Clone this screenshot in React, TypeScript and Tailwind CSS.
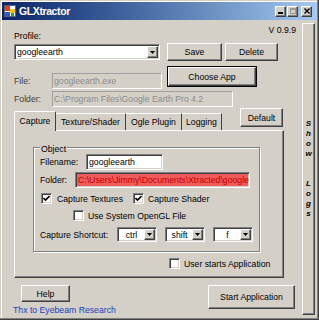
import React from "react";

const raised =
  "border border-t-white border-l-white border-r-[#404040] border-b-[#404040] shadow-[inset_-1px_-1px_0_#808080]";
const sunken =
  "border border-t-[#808080] border-l-[#808080] border-r-white border-b-white shadow-[inset_1px_1px_0_#404040,inset_-1px_-1px_0_#d4d0c8]";

function Btn({ children, className = "" }: { children: React.ReactNode; className?: string }) {
  return <div className={`${raised} bg-[#d4d0c8] flex items-center justify-center ${className}`}>{children}</div>;
}

function Arrow() {
  return (
    <svg width="5" height="3" viewBox="0 0 5 3">
      <path d="M0 0h5L2.5 3z" fill="#000" />
    </svg>
  );
}

function Combo({ value, className = "", center }: { value: string; className?: string; center?: boolean }) {
  return (
    <div className={`${sunken} bg-white p-[1px] flex items-stretch ${className}`}>
      <div className={`flex-1 flex items-center ${center ? "justify-center" : "pl-[1px]"}`}>{value}</div>
      <div className={`${raised} bg-[#d4d0c8] w-[11px] flex items-center justify-center`}>
        <Arrow />
      </div>
    </div>
  );
}

function Check({ checked }: { checked?: boolean }) {
  return (
    <div className={`w-[11px] h-[11px] bg-white ${sunken} flex items-center justify-center shrink-0`}>
      {checked && (
        <svg width="7" height="7" viewBox="0 0 7 7">
          <path d="M0.5 3 L2.5 5 L6.5 1" stroke="#000" strokeWidth="1.6" fill="none" />
        </svg>
      )}
    </div>
  );
}

function TitleIcon() {
  return (
    <svg width="12" height="12" viewBox="0 0 12 12">
      <rect x="0.5" y="0.5" width="11" height="11" fill="#fff" stroke="#5a5a7a" />
      <rect x="1" y="1" width="5" height="5" fill="#e0401c" />
      <rect x="6" y="4" width="5" height="4" fill="#f2c418" />
      <rect x="1" y="7" width="5" height="4" fill="#2a58d0" />
      <rect x="7" y="8" width="3" height="3" fill="#3a9a3a" />
    </svg>
  );
}

export default function App() {
  return (
    <div className="w-[319px] h-[320px] bg-[#d4d0c8] flex flex-col overflow-hidden text-black text-[8.7px] leading-[10px] font-['Liberation_Sans',Arial,sans-serif] shadow-[inset_-1px_-1px_0_#404040,inset_-2px_-2px_0_#808080,inset_1px_1px_0_#d4d0c8,inset_2px_2px_0_#ffffff]">
      {/* title bar */}
      <div className="mt-[2px] mx-[2px] h-[18px] flex items-center bg-linear-to-r from-[#0a246a] to-[#a6caf0] shrink-0">
        <div className="ml-[2px]">
          <TitleIcon />
        </div>
        <span className="ml-[3px] text-white font-bold text-[10.5px] tracking-[-0.4px] leading-[12px]">GLXtractor</span>
        <div className="ml-auto mr-[5px] flex items-center">
          <Btn className="w-[11px] h-[11px] items-end pb-[2px]">
            <div className="w-[5px] h-[2px] bg-black" />
          </Btn>
          <Btn className="w-[11px] h-[11px] ml-[1px]">
            <div className="w-[6px] h-[6px] border border-t-2 border-[#9a9a9a]" />
          </Btn>
          <Btn className="w-[11px] h-[11px] ml-[3px]">
            <svg width="6" height="6" viewBox="0 0 6 6">
              <path d="M0.5 0.5 L5.5 5.5 M5.5 0.5 L0.5 5.5" stroke="#000" strokeWidth="1.4" />
            </svg>
          </Btn>
        </div>
      </div>

      {/* body */}
      <div className="flex-1 flex">
        <div className="w-[302px] flex flex-col">
          {/* profile + version */}
          <div className="h-[23px] flex justify-between items-start">
            <span className="ml-[14px] mt-[11px]">Profile:</span>
            <span className="mt-[5px] mr-[6px]">V 0.9.9</span>
          </div>

          {/* profile combo + buttons */}
          <div className="h-[18px] flex items-start">
            <Combo value="googleearth" className="ml-[14px] mt-[1px] w-[146px] h-[16px]" />
            <Btn className="ml-[7px] w-[55px] h-[18px]">Save</Btn>
            <Btn className="ml-[3px] w-[53px] h-[18px]">Delete</Btn>
          </div>

          {/* file */}
          <div className="mt-[5px] flex items-start">
            <div className="mt-[7px] flex items-center">
              <span className="ml-[14px] w-[38px] text-[#404040]">File:</span>
              <div className="w-[110px] h-[16px] border border-t-[#a0a0a0] border-l-[#a0a0a0] border-r-white border-b-white pl-[1px] flex items-center text-[#8c8c8c]">
                googleearth.exe
              </div>
            </div>
            <div className="ml-[5px] border border-black">
              <Btn className="w-[88px] h-[19px]">Choose App</Btn>
            </div>
          </div>

          {/* folder */}
          <div className="mt-[2px] flex items-center">
            <span className="ml-[14px] w-[38px] text-[#404040]">Folder:</span>
            <div className="w-[181px] h-[16px] border border-t-[#a0a0a0] border-l-[#a0a0a0] border-r-white border-b-white pl-[1px] flex items-center text-[#8c8c8c] whitespace-nowrap overflow-hidden">
              C:\Program Files\Google Earth Pro 4.2
            </div>
          </div>

          {/* tabs + default */}
          <div className="mt-[1px] flex items-start">
            <div className="ml-[14px] mt-[3px] h-[19px] flex items-end">
              <div className="relative z-10 -mb-[1px] h-[20px] w-[42px] bg-[#d4d0c8] border-l border-t border-white border-r-[#404040] border-r rounded-t-[2px] flex items-center justify-center pb-[1px]">
                Capture
              </div>
              <div className="h-[17px] w-[70px] border-t border-white border-r border-r-[#404040] flex items-center justify-center">
                Texture/Shader
              </div>
              <div className="h-[17px] w-[56px] border-t border-white border-r border-r-[#404040] flex items-center justify-center">
                Ogle Plugin
              </div>
              <div className="h-[17px] w-[40px] border-t border-white border-r border-r-[#404040] flex items-center justify-center">
                Logging
              </div>
            </div>
            <Btn className="ml-auto mr-[19px] w-[43px] h-[19px]">Default</Btn>
          </div>

          {/* tab panel */}
          <div className={`ml-[14px] w-[270px] h-[148px] ${raised} flex flex-col`}>
            <div className="relative ml-[18px] mt-[16px] w-[227px] h-[105px] border border-[#808080] shadow-[inset_1px_1px_0_#ffffff,1px_1px_0_#ffffff] flex flex-col">
              <span className="absolute left-[6px] -top-[4px] px-[1px] bg-[#d4d0c8]">Object</span>

              <div className="mt-[6px] h-[16px] flex items-center">
                <span className="ml-[6px] w-[46px]">Filename:</span>
                <div className={`w-[77px] h-[16px] bg-white ${sunken} pl-[2px] flex items-center`}>googleearth</div>
              </div>

              <div className="mt-[2px] h-[16px] flex items-center">
                <span className="ml-[6px] w-[35px]">Folder:</span>
                <div className={`w-[175px] h-[16px] bg-[#f05c5c] ${sunken} pl-[2px] flex items-center text-[#c00000] whitespace-nowrap overflow-hidden`}>
                  C:\Users\Jimmy\Documents\Xtracted\googleearth
                </div>
              </div>

              <div className="mt-[5px] h-[11px] flex items-center">
                <div className="ml-[7px] w-[92px] flex items-center">
                  <Check checked />
                  <span className="ml-[5px]">Capture Textures</span>
                </div>
                <Check checked />
                <span className="ml-[4px]">Capture Shader</span>
              </div>

              <div className="mt-[6px] h-[11px] flex items-center">
                <div className="ml-[39px]">
                  <Check />
                </div>
                <span className="ml-[4px]">Use System OpenGL File</span>
              </div>

              <div className="mt-[6px] h-[15px] flex items-center">
                <span className="ml-[6px] w-[77px]">Capture Shortcut:</span>
                <Combo value="ctrl" center className="w-[40px] h-[15px]" />
                <Combo value="shift" center className="ml-[8px] w-[40px] h-[15px]" />
                <Combo value="f" center className="ml-[8px] w-[40px] h-[15px]" />
              </div>
            </div>

            <div className="mt-[6px] h-[11px] flex items-center">
              <div className="ml-[154px]">
                <Check />
              </div>
              <span className="ml-[4px]">User starts Application</span>
            </div>
          </div>

          {/* bottom */}
          <div className="mt-[7px] flex items-start">
            <div className="flex flex-col">
              <Btn className="ml-[21px] w-[49px] h-[17px]">Help</Btn>
              <span className="ml-[13px] mt-[3px] text-[#2040c0]">Thx to Eyebeam Research</span>
            </div>
            <Btn className="ml-auto mr-[7px] w-[87px] h-[24px]">Start Application</Btn>
          </div>
        </div>

        {/* show logs side button */}
        <div className={`mt-[3px] mb-[5px] w-[13px] ${raised} bg-[#d4d0c8] flex items-center justify-center`}>
          <div className="flex flex-col items-center font-bold italic text-[8px] leading-[10px]">
            {["S", "h", "o", "w", "\u00a0", "\u00a0", "L", "o", "g", "s"].map((c, i) => (
              <span key={i}>{c}</span>
            ))}
          </div>
        </div>
      </div>
    </div>
  );
}
